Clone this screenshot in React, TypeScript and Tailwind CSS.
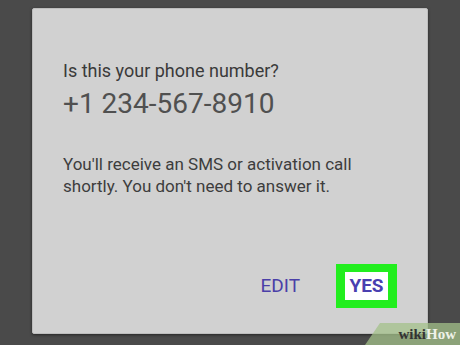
export default function App() {
  return (
    <div
      className="relative w-[460px] h-[345px] overflow-hidden bg-[#4a4a4a] pt-[8px] pl-[32px]"
      style={{ fontFamily: 'Roboto, "Liberation Sans", sans-serif' }}
    >
      {/* Dialog */}
      <div className="w-[396px] h-[326px] bg-[#d1d1d1] rounded-[2px] border border-[#bdbdbd] shadow-[0_1px_3px_rgba(0,0,0,0.5)] flex flex-col pl-[30px] pr-[30px]">
        <p className="mt-[50px] text-[18px] leading-[24px] text-[#3a3a3a]">Is this your phone number?</p>
        <p className="mt-[5px] text-[28px] leading-[32px] text-[#505050]">+1 234-567-8910</p>
        <p className="mt-[33px] text-[17px] leading-[22px] text-[#3d3d3d] w-[325px]">
          You'll receive an SMS or activation call shortly. You don't need to answer it.
        </p>
        <div className="mt-auto mb-[25px] flex items-center justify-end gap-[36px]">
          <span className="text-[19px] text-[#4a3fa8]">EDIT</span>
          <div className="w-[61px] h-[44px] bg-[#22ee1e] flex items-center justify-center">
            <div className="w-[43px] h-[28px] bg-white flex items-center justify-center">
              <span className="text-[19px] font-bold text-[#4a3fb0]">YES</span>
            </div>
          </div>
        </div>
      </div>

      {/* wikiHow watermark */}
      <div className="absolute right-0 bottom-0 w-[95px] h-[22px] bg-[#a3c08a]/75 [clip-path:polygon(15px_0,100%_0,100%_100%,0_100%)] flex items-center justify-end pr-[4px]">
        <span
          className="text-[15px] font-bold leading-none"
          style={{ fontFamily: '"Liberation Serif", serif' }}
        >
          <span className="text-[#333]">wiki</span>
          <span className="text-[#eef2e8]">How</span>
        </span>
      </div>
    </div>
  );
}
